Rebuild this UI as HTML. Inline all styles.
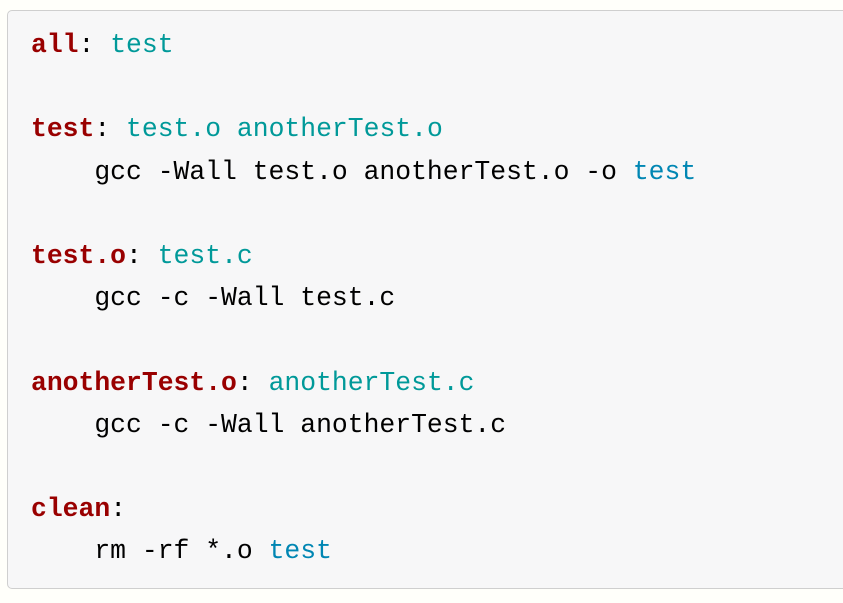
<!DOCTYPE html>
<html><head><style>
html,body{margin:0;padding:0;background:#fffffa;width:843px;height:603px;overflow:hidden}
.box{position:absolute;left:7px;top:10px;width:850px;height:579px;background:#f7f7f8;border:1px solid #cfcfcf;border-radius:5px;box-sizing:border-box}
pre{position:absolute;left:31px;top:24px;margin:0;font-family:"Liberation Mono",monospace;font-size:26.4px;line-height:42.2px;color:#000}
.k{color:#990000;font-weight:bold}.t{color:#009999}.b{color:#0086b3}
</style></head><body>
<div class="box"></div>
<pre><span class="k">all</span>: <span class="t">test</span>

<span class="k">test</span>: <span class="t">test.o anotherTest.o</span>
    gcc -Wall test.o anotherTest.o -o <span class="b">test</span>

<span class="k">test.o</span>: <span class="t">test.c</span>
    gcc -c -Wall test.c

<span class="k">anotherTest.o</span>: <span class="t">anotherTest.c</span>
    gcc -c -Wall anotherTest.c

<span class="k">clean</span>:
    rm -rf *.o <span class="b">test</span></pre>
</body></html>
